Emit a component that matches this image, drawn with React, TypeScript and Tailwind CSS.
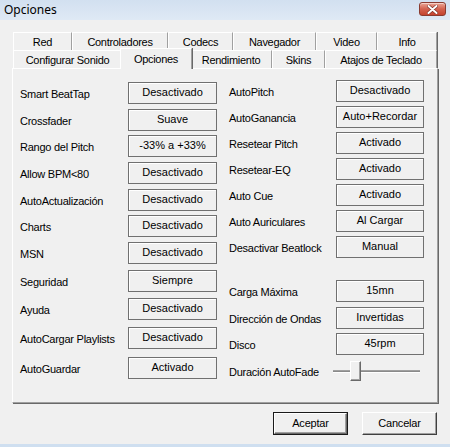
import React from "react";

type Row = { label: string; value: string; mt: string };

const leftRows: Row[] = [
  { label: "Smart BeatTap", value: "Desactivado", mt: "mt-0" },
  { label: "Crossfader", value: "Suave", mt: "mt-[5px]" },
  { label: "Rango del Pitch", value: "-33% a +33%", mt: "mt-[4px]" },
  { label: "Allow BPM<80", value: "Desactivado", mt: "mt-[5px]" },
  { label: "AutoActualización", value: "Desactivado", mt: "mt-[5px]" },
  { label: "Charts", value: "Desactivado", mt: "mt-[4px]" },
  { label: "MSN", value: "Desactivado", mt: "mt-[5px]" },
  { label: "Seguridad", value: "Siempre", mt: "mt-[6px]" },
  { label: "Ayuda", value: "Desactivado", mt: "mt-[6px]" },
  { label: "AutoCargar Playlists", value: "Desactivado", mt: "mt-[7px]" },
  { label: "AutoGuardar", value: "Activado", mt: "mt-[8px]" },
];

const rightRows: Row[] = [
  { label: "AutoPitch", value: "Desactivado", mt: "mt-0" },
  { label: "AutoGanancia", value: "Auto+Recordar", mt: "mt-[4px]" },
  { label: "Resetear Pitch", value: "Activado", mt: "mt-[4px]" },
  { label: "Resetear-EQ", value: "Activado", mt: "mt-[4px]" },
  { label: "Auto Cue", value: "Activado", mt: "mt-[4px]" },
  { label: "Auto Auriculares", value: "Al Cargar", mt: "mt-[4px]" },
  { label: "Desactivar Beatlock", value: "Manual", mt: "mt-[4px]" },
  { label: "Carga Máxima", value: "15mn", mt: "mt-[22px]" },
  { label: "Dirección de Ondas", value: "Invertidas", mt: "mt-[5px]" },
  { label: "Disco", value: "45rpm", mt: "mt-[4px]" },
];

const tabsRow1 = [
  { t: "Red", w: "w-[59px]" },
  { t: "Controladores", w: "w-[96px]" },
  { t: "Codecs", w: "w-[65px]" },
  { t: "Navegador", w: "w-[83px]" },
  { t: "Video", w: "w-[61px]" },
  { t: "Info", w: "w-[60px]" },
];

function Tab({ t, w }: { t: string; w: string }) {
  return (
    <div
      className={`${w} h-[18px] shrink-0 flex items-center justify-center border-l border-t border-white border-r border-r-[#a0a0a0] shadow-[1px_0_0_#696969] tracking-[-0.3px] pt-[1px]`}
    >
      {t}
    </div>
  );
}

function ValueBox({ value, w }: { value: string; w: string }) {
  return (
    <div
      className={`${w} h-[22px] shrink-0 flex items-center justify-center border border-[#707070] shadow-[inset_1px_1px_0_#ffffff] pb-[1px]`}
    >
      {value}
    </div>
  );
}

function OptionRow({ row, labelW, boxW }: { row: Row; labelW: string; boxW: string }) {
  return (
    <div className={`${row.mt} flex items-center`}>
      <div className={`${labelW} shrink-0 tracking-[-0.25px] pt-[2px]`}>{row.label}</div>
      <ValueBox value={row.value} w={boxW} />
    </div>
  );
}

export default function App() {
  return (
    <div
      className="w-[450px] h-[447px] bg-[#f0f0f0] flex flex-col overflow-hidden text-[11px] text-black"
      style={{ fontFamily: '"Liberation Sans", Arial, sans-serif' }}
    >
      {/* Title bar */}
      <div className="h-[20px] shrink-0 flex items-start justify-between bg-gradient-to-b from-[#d2e0f0] to-[#dfe9f5]">
        <div
          className="pl-[4px] pt-[1px] text-[12px] text-black"
          style={{ fontFamily: '"Noto Sans", "Open Sans", sans-serif' }}
        >
          Opciones
        </div>
        <div className="mt-[2px] mr-[4px] w-[27px] h-[14px] rounded-[3px] border border-[#8a3b30] bg-gradient-to-b from-[#eaa697] via-[#d3624f] to-[#c4432f] flex items-center justify-center shadow-[inset_0_1px_0_#f6cfc6]">
          <svg width="11" height="9" viewBox="0 0 11 9">
            <path d="M1.5 1 L9.5 8 M9.5 1 L1.5 8" stroke="#7a2b22" strokeWidth="3.2" strokeLinecap="round" />
            <path d="M1.5 1 L9.5 8 M9.5 1 L1.5 8" stroke="#ffffff" strokeWidth="2" strokeLinecap="round" />
          </svg>
        </div>
      </div>

      {/* Tabs */}
      <div className="mt-[12px] ml-[13px] w-[424px] flex flex-col">
        <div className="flex h-[18px]">
          {tabsRow1.map((t) => (
            <Tab key={t.t} t={t.t} w={t.w} />
          ))}
        </div>
        <div className="flex h-[18px]">
          <Tab t="Configurar Sonido" w="w-[109px]" />
          <div className="relative z-10 -mx-[2px] -mt-[2px] w-[72px] h-[21px] shrink-0 flex items-center justify-center bg-[#f0f0f0] border-l border-t border-white border-r border-r-[#a0a0a0] shadow-[1px_0_0_#696969] tracking-[-0.3px]">
            Opciones
          </div>
          <Tab t="Rendimiento" w="w-[82px]" />
          <Tab t="Skins" w="w-[53px]" />
          <Tab t="Atajos de Teclado" w="w-[112px]" />
        </div>
      </div>

      {/* Panel */}
      <div className="ml-[12px] w-[426px] h-[335px] shrink-0 border-l border-t border-white border-r border-b border-r-[#a0a0a0] border-b-[#a0a0a0] shadow-[1px_1px_0_#696969] flex pt-[11px] pl-[7px]">
        <div className="w-[197px] mt-[2px] flex flex-col">
          {leftRows.map((r) => (
            <OptionRow key={r.label} row={r} labelW="w-[108px]" boxW="w-[89px]" />
          ))}
        </div>
        <div className="ml-[12px] w-[195px] flex flex-col">
          {rightRows.map((r) => (
            <OptionRow key={r.label} row={r} labelW="w-[107px]" boxW="w-[88px]" />
          ))}
          <div className="mt-[6px] flex items-center h-[20px]">
            <div className="w-[104px] shrink-0 tracking-[-0.25px] pt-[2px]">Duración AutoFade</div>
            <div className="relative w-[87px] h-[20px]">
              <div className="absolute left-0 right-0 top-[9px] h-[3px] border-t border-[#a0a0a0] border-b border-b-white bg-[#8a8a8a]" />
              <div className="absolute left-[17px] top-0 w-[11px] h-[20px] bg-[#f0f0f0] border-l border-t border-white border-r border-b border-r-[#696969] border-b-[#696969] shadow-[inset_-1px_-1px_0_#a0a0a0]" />
            </div>
          </div>
        </div>
      </div>

      {/* Buttons */}
      <div className="mt-[9px] mr-[13px] flex justify-end gap-[14px]">
        <div className="w-[75px] h-[23px] border border-[#1a1a1a] flex">
          <div className="flex-1 flex items-center justify-center border-l border-t border-white border-r border-b border-r-[#696969] border-b-[#696969] shadow-[inset_-1px_-1px_0_#a0a0a0] tracking-[-0.2px]">
            Aceptar
          </div>
        </div>
        <div className="w-[75px] h-[23px] flex items-center justify-center border-l border-t border-white border-r border-b border-r-[#404040] border-b-[#404040] shadow-[inset_-1px_-1px_0_#a0a0a0] tracking-[-0.2px]">
          Cancelar
        </div>
      </div>

      <div className="mt-auto h-[3px] bg-[#cfdff0]" />
    </div>
  );
}
